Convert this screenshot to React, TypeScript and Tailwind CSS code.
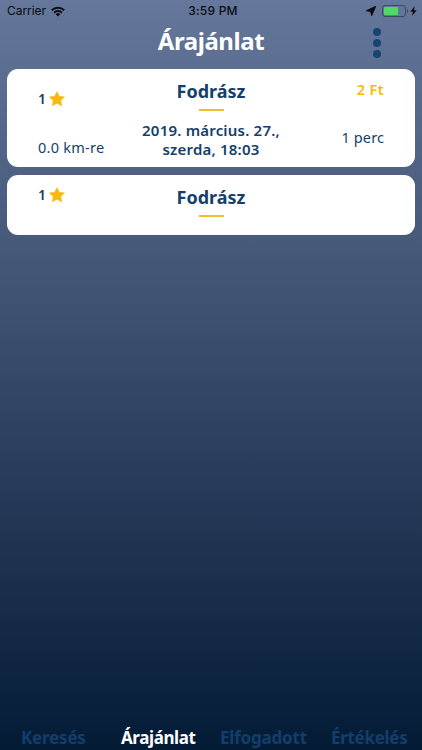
import React from "react";

type Offer = {
  rating: number;
  name: string;
  distance?: string;
  date?: string[];
  price?: string;
  duration?: string;
};

const offers: Offer[] = [
  {
    rating: 1,
    name: "Fodrász",
    distance: "0.0 km-re",
    date: ["2019. március. 27.,", "szerda, 18:03"],
    price: "2 Ft",
    duration: "1 perc",
  },
  { rating: 1, name: "Fodrász" },
];

function StatusBar() {
  return (
    <div className="grid h-[22px] grid-cols-[1fr_auto_1fr] items-center pl-[7px] pr-[5px] font-['Inter','Liberation_Sans',sans-serif] text-[12px] leading-[22px] text-[#0a0c12]">
      <div className="flex items-center gap-[5px]">
        <span className="tracking-[-0.05px]">Carrier</span>
        <svg width="14" height="11" viewBox="0 0 14 11" fill="none" stroke="currentColor" strokeWidth="2">
          <path d="M0.8 4.2a9 9 0 0 1 12.4 0" />
          <path d="M3.1 6.7a5.6 5.6 0 0 1 7.8 0" />
          <path d="M7 10.6 4.7 8.2a3.3 3.3 0 0 1 4.6 0z" fill="currentColor" stroke="none" />
        </svg>
      </div>
      <span className="pl-[2px] font-medium tracking-[0.2px]">3:59 PM</span>
      <div className="flex items-center justify-end">
        <svg width="10" height="10" viewBox="0 0 10 10" className="mr-[6px]" fill="currentColor">
          <path d="M9.9 0.1 5.7 9.8 4.6 5.6 0.2 4.8z" stroke="currentColor" strokeWidth="0.8" />
        </svg>
        <svg width="27" height="12" viewBox="0 0 27 12">
          <rect x="0.5" y="0.5" width="23" height="11" rx="2.5" fill="none" stroke="#3d495d" />
          <rect x="2" y="2" width="14" height="8" rx="1" fill="#4cd964" />
          <path d="M25 4v4c1.6-.6 1.6-3.4 0-4z" fill="#3d495d" />
        </svg>
        <svg width="7" height="10" viewBox="0 0 7 10" className="ml-px" fill="currentColor">
          <path d="M4.7 0 0.3 5.7h2.6L2 10l4.7-5.8H3.9z" />
        </svg>
      </div>
    </div>
  );
}

function Rating({ value }: { value: number }) {
  return (
    <div className="flex h-[18px] items-center gap-[3px] text-[14px] font-semibold leading-[18px]">
      <span>{value}</span>
      <svg width="16" height="16" viewBox="0 0 16 16" fill="#f7b90f" stroke="#f7b90f" strokeWidth="0.6" strokeLinejoin="round">
        <path d="M8 0.7 10.3 5.3 15.5 6 11.7 9.6 12.7 14.8 8 12.3 3.3 14.8 4.3 9.6 0.5 6 5.7 5.3z" />
      </svg>
    </div>
  );
}

function OfferCard({ offer }: { offer: Offer }) {
  return (
    <div
      className={`grid grid-cols-[103px_1fr_103px] rounded-[11px] bg-white px-[31px] text-[#153f6b] ${
        offer.date ? "h-[98px]" : "h-[60px]"
      }`}
    >
      <div className={offer.date ? "pt-[21px]" : "pt-[11px]"}>
        <Rating value={offer.rating} />
        {offer.distance && (
          <p className="mt-[29px] text-[14.5px] leading-5 tracking-[0.25px]">{offer.distance}</p>
        )}
      </div>
      <div className="flex flex-col items-center whitespace-nowrap">
        <h2 className="mt-[10px] text-[18px] font-bold leading-6">{offer.name}</h2>
        <div className="mt-[6px] h-[2px] w-[25px] bg-[#f0be2d]" />
        {offer.date && (
          <p className="mt-[10px] text-center text-[15px] font-semibold leading-[19px] tracking-[0.2px]">
            {offer.date[0]}
            <br />
            {offer.date[1]}
          </p>
        )}
      </div>
      <div className="flex flex-col items-end">
        {offer.price && (
          <p className="mt-[10px] text-[14.5px] font-semibold leading-5 tracking-[0.4px] text-[#f7b90f]">{offer.price}</p>
        )}
        {offer.duration && (
          <p className="mt-[28px] text-[14.5px] leading-5 tracking-[0.1px]">{offer.duration}</p>
        )}
      </div>
    </div>
  );
}

export default function App() {
  return (
    <div className="flex h-[750px] w-[422px] flex-col overflow-hidden bg-linear-to-b/srgb from-[#65779a] to-[#041b36] font-['Noto_Sans','Open_Sans',sans-serif]">
      <StatusBar />
      <header className="grid h-[47px] grid-cols-[1fr_auto_1fr] pr-[41px]">
        <span />
        <h1 className="pl-[41px] text-[24px] font-bold leading-[38px] tracking-[-0.45px] text-white">Árajánlat</h1>
        <button type="button" aria-label="Menu" className="mt-[6px] flex flex-col items-center gap-[3px] self-start justify-self-end">
          <span className="size-2 rounded-full bg-[#164574]" />
          <span className="size-2 rounded-full bg-[#164574]" />
          <span className="size-2 rounded-full bg-[#164574]" />
        </button>
      </header>
      <main className="flex flex-1 flex-col gap-2 px-[7px]">
        {offers.map((offer, i) => (
          <OfferCard key={i} offer={offer} />
        ))}
      </main>
      <nav className="flex h-[25px] pl-[21px] text-[17px] font-bold leading-[26px] whitespace-nowrap text-[#123e6d]">
        <span className="w-[100px] tracking-[-0.2px]">Keresés</span>
        <span className="w-[99px] tracking-[-0.4px] text-white">Árajánlat</span>
        <span className="w-[111px] tracking-[-0.2px]">Elfogadott</span>
        <span className="tracking-[-0.3px]">Értékelés</span>
      </nav>
    </div>
  );
}
